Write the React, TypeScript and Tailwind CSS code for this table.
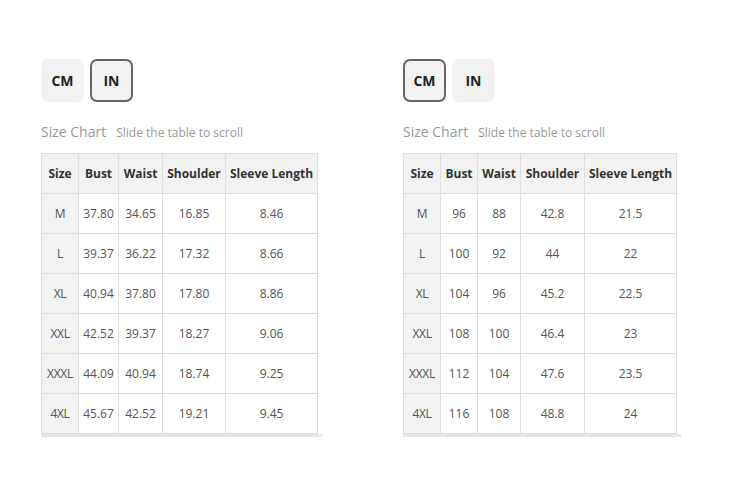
import React from 'react';

type Chart = {
  unit: 'CM' | 'IN';
  widths: number[];
  rows: string[][];
};

const headers = ['Size', 'Bust', 'Waist', 'Shoulder', 'Sleeve Length'];

const charts: Chart[] = [
  {
    unit: 'IN',
    widths: [37, 40, 44, 63, 92],
    rows: [
      ['M', '37.80', '34.65', '16.85', '8.46'],
      ['L', '39.37', '36.22', '17.32', '8.66'],
      ['XL', '40.94', '37.80', '17.80', '8.86'],
      ['XXL', '42.52', '39.37', '18.27', '9.06'],
      ['XXXL', '44.09', '40.94', '18.74', '9.25'],
      ['4XL', '45.67', '42.52', '19.21', '9.45'],
    ],
  },
  {
    unit: 'CM',
    widths: [37, 37, 43, 64, 92],
    rows: [
      ['M', '96', '88', '42.8', '21.5'],
      ['L', '100', '92', '44', '22'],
      ['XL', '104', '96', '45.2', '22.5'],
      ['XXL', '108', '100', '46.4', '23'],
      ['XXXL', '112', '104', '47.6', '23.5'],
      ['4XL', '116', '108', '48.8', '24'],
    ],
  },
];

const UnitButton = ({ label, active }: { label: string; active: boolean }) => (
  <button
    className={
      active
        ? 'w-[43px] h-[43px] rounded-[7px] border-2 border-[#666] bg-[#f2f2f2] text-[14px] font-bold text-[#222]'
        : 'w-[43px] h-[43px] rounded-[7px] border-2 border-transparent bg-[#f2f2f2] text-[14px] font-bold text-[#222]'
    }
  >
    {label}
  </button>
);

const SizeChart = ({ chart }: { chart: Chart }) => (
  <div className="flex flex-col w-[281px]">
    <div className="flex gap-[6px]">
      <UnitButton label="CM" active={chart.unit === 'CM'} />
      <UnitButton label="IN" active={chart.unit === 'IN'} />
    </div>

    <div className="flex items-baseline mt-[19px] h-[20px]">
      <span className="text-[14px] text-[#999]">Size Chart</span>
      <span className="text-[12px] text-[#999] ml-[10px]">Slide the table to scroll</span>
    </div>

    <div className="mt-[12px] w-fit">
      <table className="border-collapse table-fixed">
        <colgroup>
          {chart.widths.map((w, i) => (
            <col key={i} style={{ width: w }} />
          ))}
        </colgroup>
        <thead>
          <tr className="h-[40px] bg-[#f2f2f2]">
            {headers.map((h) => (
              <th
                key={h}
                className="border border-[#ddd] px-0 text-[12px] font-bold text-[#333] text-center whitespace-nowrap"
              >
                {h}
              </th>
            ))}
          </tr>
        </thead>
        <tbody>
          {chart.rows.map((row) => (
            <tr key={row[0]} className="h-[40px]">
              {row.map((cell, i) => (
                <td
                  key={i}
                  className={
                    i === 0
                      ? 'border border-[#ddd] bg-[#f2f2f2] text-[12px] text-[#555] text-center tracking-[-0.3px]'
                      : 'border border-[#ddd] bg-white text-[12px] text-[#555] text-center'
                  }
                >
                  {cell}
                </td>
              ))}
            </tr>
          ))}
        </tbody>
      </table>
      <div className="h-[3px] w-[calc(100%+4px)] bg-[#e6e6e6]" />
    </div>
  </div>
);

export default function App() {
  return (
    <div
      className="w-[750px] h-[484px] bg-white flex gap-[81px] pl-[41px] pt-[59px]"
      style={{ fontFamily: '"Open Sans", "Noto Sans", sans-serif' }}
    >
      {charts.map((c) => (
        <SizeChart key={c.unit} chart={c} />
      ))}
    </div>
  );
}
